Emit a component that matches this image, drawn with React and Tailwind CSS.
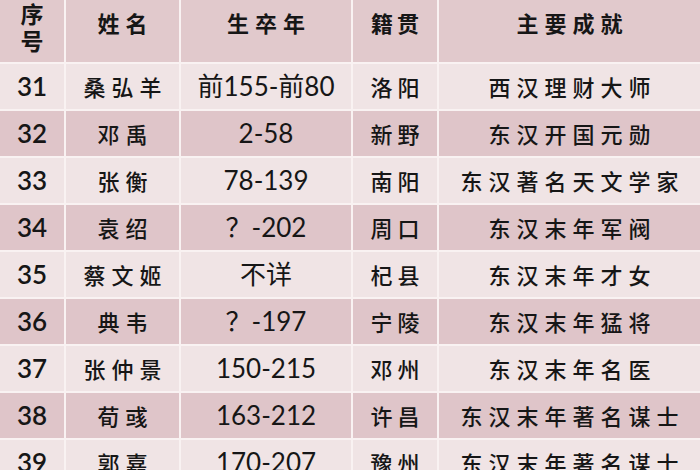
const rows = [
  ["31", "桑弘羊", "前155-前80", "洛阳", "西汉理财大师"],
  ["32", "邓禹", "2-58", "新野", "东汉开国元勋"],
  ["33", "张衡", "78-139", "南阳", "东汉著名天文学家"],
  ["34", "袁绍", "？-202", "周口", "东汉末年军阀"],
  ["35", "蔡文姬", "不详", "杞县", "东汉末年才女"],
  ["36", "典韦", "？-197", "宁陵", "东汉末年猛将"],
  ["37", "张仲景", "150-215", "邓州", "东汉末年名医"],
  ["38", "荀彧", "163-212", "许昌", "东汉末年著名谋士"],
  ["39", "郭嘉", "170-207", "豫州", "东汉末年著名谋士"],
];

const cjk = "font-['Noto_Sans_CJK_SC',sans-serif]";
const num = "font-['Lato','Noto_Sans_CJK_SC',sans-serif]";

const App = () => {
  return (
    <div className="w-[700px] h-[470px] overflow-hidden bg-[#f7eeef]">
      <div className="grid grid-cols-[64px_113px_170px_84px_1fr] gap-[2px] bg-[#f9f2f2] text-[#161616]">
        <div className={`h-[62px] bg-[#e1c9cc] flex flex-col items-center justify-start ${cjk} font-bold text-[23px] leading-[27px]`}>
          <span>序</span>
          <span>号</span>
        </div>
        <div className={`h-[62px] bg-[#e1c9cc] flex items-center justify-center ${cjk} font-bold text-[22px] tracking-[6px] pl-[6px] pb-[18px]`}>
          姓名
        </div>
        <div className={`h-[62px] bg-[#e1c9cc] flex items-center justify-center ${cjk} font-bold text-[22px] tracking-[6px] pl-[6px] pb-[18px]`}>
          生卒年
        </div>
        <div className={`h-[62px] bg-[#e1c9cc] flex items-center justify-center ${cjk} font-bold text-[22px] tracking-[4px] pl-[4px] pb-[18px]`}>
          籍贯
        </div>
        <div className={`h-[62px] bg-[#e1c9cc] flex items-center justify-center ${cjk} font-bold text-[22px] tracking-[6px] pl-[6px] pb-[18px]`}>
          主要成就
        </div>

        {rows.map((r, i) => {
          const bg = i % 2 === 0 ? "bg-[#f0e4e5]" : "bg-[#dfc5c9]";
          return [
            <div key={r[0] + "a"} className={`h-[45px] ${bg} flex items-center justify-center ${num} font-semibold text-[26px]`}>
              {r[0]}
            </div>,
            <div key={r[0] + "b"} className={`h-[45px] ${bg} flex items-center justify-center ${cjk} font-medium text-[22px] tracking-[6px] pl-[6px]`}>
              {r[1]}
            </div>,
            <div key={r[0] + "c"} className={`h-[45px] ${bg} flex items-center justify-center ${num} text-[26px]`}>
              {r[2]}
            </div>,
            <div key={r[0] + "d"} className={`h-[45px] ${bg} flex items-center justify-center ${cjk} font-medium text-[22px] tracking-[5px] pl-[5px]`}>
              {r[3]}
            </div>,
            <div key={r[0] + "e"} className={`h-[45px] ${bg} flex items-center justify-center ${cjk} font-medium text-[22px] tracking-[6px] pl-[6px]`}>
              {r[4]}
            </div>,
          ];
        })}
      </div>
    </div>
  );
};

export default App;
